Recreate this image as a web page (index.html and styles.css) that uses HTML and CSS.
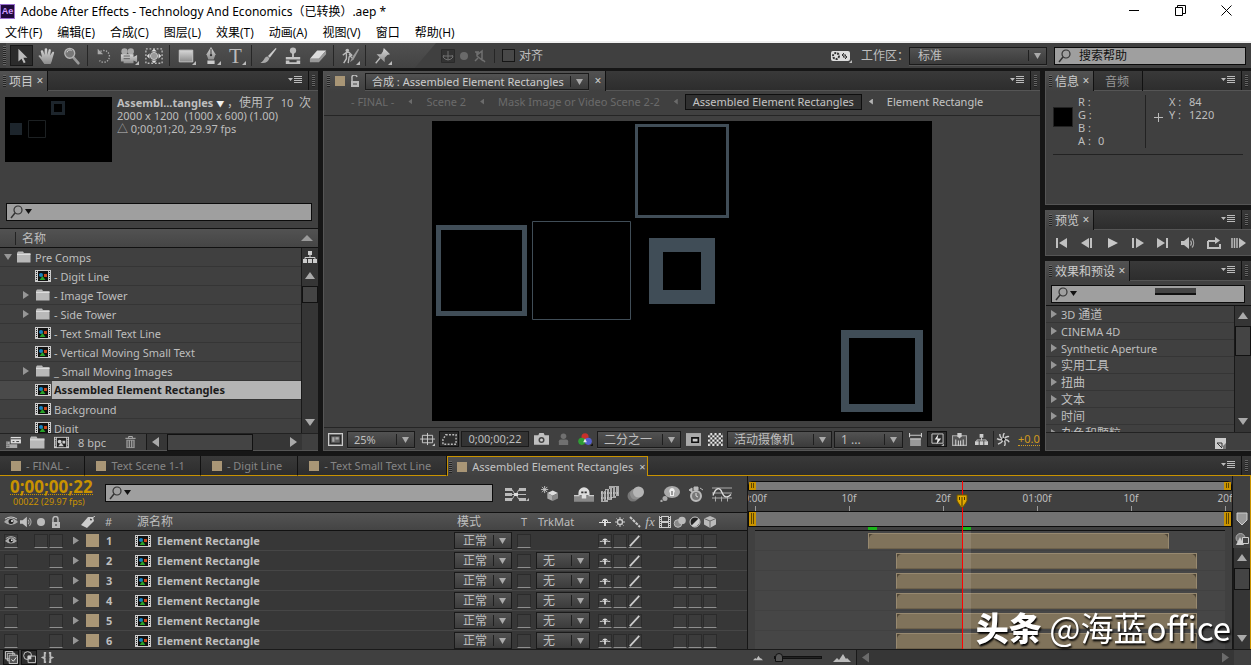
FILE: index.html
```html
<!DOCTYPE html>
<html lang="zh-CN">
<head>
    <meta charset="UTF-8">
    <meta name="viewport" content="width=device-width, initial-scale=1.0">
    <title>Adobe After Effects - Technology And Economics（已转换）.aep *</title>
    <link rel="stylesheet" href="styles.css">
</head>
<body>
    <!-- Icon sprite -->
    <svg class="sprite" aria-hidden="true">
        <defs>
            <linearGradient id="metal" x1="0" y1="0" x2="0" y2="1"><stop offset="0" stop-color="#d8d8d8"/><stop offset="1" stop-color="#8c8c8c"/></linearGradient>
            <pattern id="checker" width="4" height="4" patternUnits="userSpaceOnUse"><rect width="4" height="4" fill="#eee"/><path d="M0 0h2v2H0zM2 2h2v2H2z" fill="#333"/></pattern>
        </defs>
        <symbol id="i-cursor" viewBox="0 0 20 20"><path d="M6 2v14l3.500-3 2.500 5 2-1-2.500-5H16z" fill="#bbb"/></symbol>
        <symbol id="i-hand" viewBox="0 0 20 20"><path d="M7 19C5 16 3 13 .5 10c1-1.500 2.500-.5 4 1.500L3 4.500c1-1.500 2.500-.5 3 .5l1.200 4L7.500 2c.8-1.200 2.500-.8 2.700.3L10.500 9l1.300-6c.9-1 2.500-.4 2.500.6L13.500 9.500l2.300-3.800c1-.8 2.400 0 2.100 1L16 13c-.5 2-1 4-2 6z" fill="url(#metal)"/></symbol>
        <symbol id="i-zoom" viewBox="0 0 20 20"><path d="m11 11 6 7" stroke="#999" stroke-width="3" stroke-linecap="round"/><circle cx="7.500" cy="7" r="5.500" fill="#777" stroke="#b5b5b5" stroke-width="1.500"/><path d="M4.500 6a3 3 0 0 1 5-2" stroke="#ddd" fill="none"/></symbol>
        <symbol id="i-rotate" viewBox="0 0 20 20"><path d="M4 7a6.500 6.500 0 1 1 1 8" fill="none" stroke="#aaa" stroke-width="1.500" stroke-dasharray="1.500 1.500"/><path d="M3 2v6h6z" fill="#aaa"/></symbol>
        <symbol id="i-camera" viewBox="0 0 20 20"><circle cx="5" cy="5" r="3.500" fill="#aaa"/><circle cx="12" cy="5" r="3.500" fill="#aaa"/><path d="M1 8h14v3l4-2v8l-4-2v3H4v-2H1z" fill="url(#metal)"/><path d="M4 10h7M4 13h7" stroke="#555"/></symbol>
        <symbol id="i-panbehind" viewBox="0 0 20 20"><path d="M1 2h18v16H1z" fill="none" stroke="#bbb" stroke-width="1.500" stroke-dasharray="2 2"/><circle cx="10" cy="10" r="4" fill="#999" stroke="#ccc"/><path d="m10 2 3 3H7zM10 18l3-3H7zM2 10l3-3v6zM18 10l-3-3v6z" fill="#ddd"/></symbol>
        <symbol id="i-rect" viewBox="0 0 20 20"><path d="M2.500 3.500h15v13h-15z" fill="url(#metal)" stroke="#ccc"/></symbol>
        <symbol id="i-pen" viewBox="0 0 20 20"><path d="M10 0 5 8l2 6h6l2-6z" fill="url(#metal)"/><path d="M10 2v6" stroke="#333"/><circle cx="10" cy="9" r="1.300" fill="#333"/><path d="M6 15h8v4H6z" fill="#ccc"/></symbol>
        <symbol id="i-brush" viewBox="0 0 20 20"><path d="M18.500 1 10 10l2 2 7.500-10z" fill="#ccc"/><path d="M9.500 10.500c-4 0-3 5-8 7 5 1 9-.5 10-5z" fill="#aaa"/></symbol>
        <symbol id="i-stamp" viewBox="0 0 20 20"><circle cx="10" cy="4" r="3.500" fill="#bbb"/><path d="M9 6h2v5h7v3H2v-3h7zM2 15h4v2h8v-2h4v4H2z" fill="#c4c4c4"/></symbol>
        <symbol id="i-eraser" viewBox="0 0 20 20"><path d="m1 13 8-9h10l-8 9z" fill="#ddd"/><path d="M1 13h10v4H1zM11 13l8-9v4l-8 9z" fill="#999"/></symbol>
        <symbol id="i-roto" viewBox="0 0 20 20"><circle cx="7" cy="4" r="2" fill="#bbb"/><path d="m2 9 4-3h3l3 3-3 2-1 7M6 7v6l-3 5M9 8l3 4" fill="none" stroke="#bbb" stroke-width="1.500"/><path d="m19 2-7 10-2 5 4-3 6-11z" fill="#999"/></symbol>
        <symbol id="i-pin" viewBox="0 0 20 20"><path d="m12 1 7 7-3 1-3 3v5L4 8h5l2-3z" fill="url(#metal)"/><path d="m8 12-5 6" stroke="#bbb" stroke-width="1.500"/></symbol>
        <symbol id="i-axis1" viewBox="0 0 14 14"><path d="M.5.500h13v13H.5z" fill="#333" stroke="#2a2a2a"/><path d="M7 2v9M3 6l-1 2 2 2 3 1 3-1 2-2-1-2M2 7h10" stroke="#707070" fill="none"/></symbol>
        <symbol id="i-axis2" viewBox="0 0 14 14"><circle cx="7" cy="7" r="4" fill="#6a6a6a"/></symbol>
        <symbol id="i-axis3" viewBox="0 0 14 14"><path d="M2 3h4M4 3v4l5 4V2l-5 4M10 11l2 2M2 12l3-3" stroke="#707070" stroke-width="1.500" fill="none"/></symbol>
        <symbol id="i-gear" viewBox="0 0 22 14"><rect x="1" y="2" width="19" height="10" rx="2" fill="#ddd"/><circle cx="6" cy="7" r="3" fill="none" stroke="#333" stroke-width="2" stroke-dasharray="2 1"/><path d="m14 4-2 2 2 2M12 6h4M15 6l2 2-2 2M17 8h-4" stroke="#333" fill="none"/><path d="M22 11v3h-3z" fill="#bbb"/></symbol>
        <symbol id="i-menu" viewBox="0 0 14 8"><path d="M0 2h5L2.500 5zM6 0h8v1H6zM6 2h8v1H6zM6 4h8v1H6zM6 6h8v1H6z" fill="#bbb"/></symbol>
        <symbol id="i-search" viewBox="0 0 24 14"><circle cx="8" cy="5" r="4" fill="none" stroke="#333" stroke-width="1.200"/><path d="m5 8-4 5" stroke="#333" stroke-width="1.500"/><path d="M15 4h7l-3.500 5z" fill="#111"/></symbol>
        <symbol id="i-lens" viewBox="0 0 14 14"><circle cx="8" cy="5" r="4" fill="none" stroke="#333" stroke-width="1.200"/><path d="m5 8-4 5" stroke="#333" stroke-width="1.500"/></symbol>
        <symbol id="i-lock" viewBox="0 0 10 12"><path d="M2 6V3a2.500 2.500 0 0 1 5 0v3" fill="none" stroke="#bbb" stroke-width="1.500"/><path d="M1 6h8v6H1z" fill="#bbb"/><path d="M5 8v2" stroke="#333"/></symbol>
        <symbol id="i-unlock" viewBox="0 0 10 12"><path d="M2 6V3a2.500 2.500 0 0 1 5-1" fill="none" stroke="#bbb" stroke-width="1.500"/><path d="M1 6h8v6H1z" fill="#bbb"/><path d="M3 9h4" stroke="#444"/></symbol>
        <symbol id="i-comp" viewBox="0 0 16 12"><path d="M0 0h16v12H0z" fill="#ccc"/><path d="M3 1h10v10H3z" fill="#111"/><path d="M1 1h1v1H1zM1 3h1v1H1zM1 5h1v1H1zM1 7h1v1H1zM1 9h1v1H1zM14 1h1v1h-1zM14 3h1v1h-1zM14 5h1v1h-1zM14 7h1v1h-1zM14 9h1v1h-1z" fill="#222"/><circle cx="6" cy="5" r="2" fill="#1883c0"/><path d="M9 4h3v3H9z" fill="#c8461a"/><path d="m7.500 6 3 4h-6z" fill="#29a329"/></symbol>
        <symbol id="i-compgrey" viewBox="0 0 16 12"><path d="M0 0h16v12H0z" fill="#ccc"/><path d="M3 1h10v10H3z" fill="#222"/><path d="M1 1h1v1H1zM1 3h1v1H1zM1 5h1v1H1zM1 7h1v1H1zM1 9h1v1H1zM14 1h1v1h-1zM14 3h1v1h-1zM14 5h1v1h-1zM14 7h1v1h-1zM14 9h1v1h-1z" fill="#222"/><circle cx="6" cy="5" r="2" fill="#ccc"/><path d="M9 4h3v3H9zM7.500 6l3 4h-6z" fill="#ccc"/></symbol>
        <symbol id="i-folder" viewBox="0 0 14 12"><path d="M0 2 1 .5h5L7 2h6.500v9.500H0z" fill="#b9b9b9"/><path d="M0 3.500h13.500" stroke="#ddd"/></symbol>
        <symbol id="i-interpret" viewBox="0 0 16 14"><path d="M5 1h11v7H5z" fill="#ddd"/><path d="M5 3h11M7 6h2M11 6h3" stroke="#333"/><path d="M0 6h4v3h8v4H0z" fill="#aaa"/><path d="M1 7v6M3 9v4" stroke="#333" stroke-dasharray="1 1"/></symbol>
        <symbol id="i-trash" viewBox="0 0 12 14"><path d="M4 2V.5h4V2M.5 2.500h11" stroke="#bbb" fill="none"/><path d="M1.500 4h9v9h-9z" fill="#999"/><path d="M3.500 5v7M6 5v7M8.500 5v7" stroke="#444"/></symbol>
        <symbol id="i-tree" viewBox="0 0 14 14"><path d="M5 1h4v4H5zM0 9h4v4H0zM5 9h4v4H5zM10 9h4v4h-4z" fill="#ccc"/><path d="M7 5v3M2 9V7.500h10V9" stroke="#ccc" fill="none"/></symbol>
        <symbol id="i-first" viewBox="0 0 16 14"><path d="M2 2h2v10H2zM13 2v10L5 7z" fill="#c0c0c0"/></symbol>
        <symbol id="i-prev" viewBox="0 0 16 14"><path d="M10 2v10L2 7zM11 2h2v10h-2z" fill="#c0c0c0"/></symbol>
        <symbol id="i-play" viewBox="0 0 16 14"><path d="M3 2v10l10-5z" fill="#c8c8c8"/></symbol>
        <symbol id="i-next" viewBox="0 0 16 14"><path d="M2 2h2v10H2zM6 2v10l8-5z" fill="#c0c0c0"/></symbol>
        <symbol id="i-last" viewBox="0 0 16 14"><path d="M2 2v10l8-5zM11 2h2v10h-2z" fill="#c0c0c0"/></symbol>
        <symbol id="i-sound" viewBox="0 0 16 14"><path d="M1 5h3l5-4v12L4 9H1z" fill="#c0c0c0"/><path d="M10.500 4.500a4 4 0 0 1 0 5M12 2.500a7 7 0 0 1 0 9" fill="none" stroke="#aaa" stroke-width="1.200"/></symbol>
        <symbol id="i-loop" viewBox="0 0 16 14"><path d="M2 5v7h12V8M2 5h8" fill="none" stroke="#c0c0c0" stroke-width="2"/><path d="M9 1v7l5-3.500z" fill="#c0c0c0"/></symbol>
        <symbol id="i-ram" viewBox="0 0 16 14"><path d="M1 2v10M3.500 2v10M6 2v10" stroke="#bbb" stroke-width="1.500"/><path d="M8 2v10l7-5z" fill="#c0c0c0"/></symbol>
        <symbol id="i-new" viewBox="0 0 11 11"><path d="M0 0h11v11H0z" fill="#ccc"/><path d="M2 5h5v4M2 5l5 5" stroke="#333" fill="none"/><path d="M11 5v6H8V8z" fill="#777"/></symbol>
        <symbol id="i-always" viewBox="0 0 14 12"><path d="M.5.500h13v11H.5z" fill="#555" stroke="#ccc"/><path d="M2.500 2.500h9v7h-9z" fill="#666" stroke="#222"/><path d="M4 4h2v4H4zM7 4h3v2H7z" fill="#aaa"/></symbol>
        <symbol id="i-grid" viewBox="0 0 16 14"><path d="M2.500 2.500h11v8h-11zM0 6.500h16M8 0v13" fill="none" stroke="#ccc"/><path d="M16 11v3h-3z" fill="#ccc"/></symbol>
        <symbol id="i-mask" viewBox="0 0 16 12"><path d="M4 1h11v10H1V6z" fill="none" stroke="#bbb" stroke-width="1.500" stroke-dasharray="2 1.500"/></symbol>
        <symbol id="i-photo" viewBox="0 0 14 12"><path d="M0 2h4l1-2h4l1 2h4v9H0z" fill="#c0c0c0"/><circle cx="7" cy="6.500" r="2.800" fill="#444"/><circle cx="7" cy="6.500" r="1.400" fill="#ccc"/></symbol>
        <symbol id="i-person" viewBox="0 0 12 14"><circle cx="6" cy="3.500" r="3" fill="#707070"/><path d="M1 13V9q0-2 2-2h6q2 0 2 2v4z" fill="#707070"/></symbol>
        <symbol id="i-rgb" viewBox="0 0 16 14"><circle cx="7.500" cy="4" r="3.800" fill="#c8302a"/><circle cx="4" cy="9" r="3.800" fill="#2f9d35"/><circle cx="11" cy="9" r="3.800" fill="#555fd0"/><path d="m7.500 6 2 4h-4z" fill="#eee"/><path d="M16 11v3h-3z" fill="#111"/></symbol>
        <symbol id="i-roi" viewBox="0 0 14 12"><path d="M0 0h14v12H0z" fill="#aaa"/><path d="M5.500 4.500h6v4h-6z" fill="#ccc" stroke="#111" stroke-width="1.500"/></symbol>
        <symbol id="i-checker" viewBox="0 0 14 12"><path d="M0 0h14v12H0z" fill="url(#checker)"/></symbol>
        <symbol id="i-aspect" viewBox="0 0 12 12"><path d="M1 5h10v7H1z" fill="#999"/><path d="M.5 0v4M11.500 0v4M1 2h10M1 5.500h10" stroke="#ccc"/></symbol>
        <symbol id="i-fast" viewBox="0 0 14 14"><path d="M1 1h12v10H1z" fill="none" stroke="#ccc"/><path d="m8 1-4 6h3l-1 5 5-6H7z" fill="#eee"/><path d="M14 11v3h-3z" fill="#aaa"/></symbol>
        <symbol id="i-tline" viewBox="0 0 14 12"><path d="M.5 2.500h13v9H.5z" fill="#555" stroke="#aaa"/><path d="M3.500 12V6M6 12V7M8 12V7M10.500 12V6" stroke="#ccc"/><path d="M5 0h4v3L7 5 5 3z" fill="#ccc"/></symbol>
        <symbol id="i-aperture" viewBox="0 0 14 14"><path d="M7 7Q6 2 8 0M7 7Q10 3 13 4M7 7q5 0 6 3M7 7q3 3 1 7M7 7q-2 4-6 5M7 7Q3 8 0 6M7 7Q3 5 3 1" fill="none" stroke="#ccc" stroke-width="1.500"/><circle cx="7" cy="7" r="1.500" fill="#111"/></symbol>
        <symbol id="i-flow" viewBox="0 0 24 14"><path d="M0 1h7v3H0zM0 6h7v3H0zM0 11h7v3H0zM14 1h7v3h-7zM14 11h7v3h-7z" fill="#bbb"/><path d="m7 2.500 3 5-3 5M7 7.500h8M14 2.500l-3 5 3 5M14 7.500h7" stroke="#bbb" fill="none"/><path d="M9 6h4v3H9z" fill="#ddd"/><path d="M24 11v3h-3z" fill="#bbb"/></symbol>
        <symbol id="i-draft" viewBox="0 0 20 18"><path d="M4 0v8M0 4h8M1 1l6 6M7 1 1 7" stroke="#ccc"/><path d="m13 5 6 3-6 3-6-3z" fill="#ddd"/><path d="M7 8l6 3v6l-6-3z" fill="#aaa"/><path d="m19 8-6 3v6l6-3z" fill="#888"/></symbol>
        <symbol id="i-shybig" viewBox="0 0 18 14"><path d="M0 8h18v6H0z" fill="#888"/><path d="M0 8.500h5M13 8.500h5" stroke="#ccc"/><path d="M4 6a5 5 0 0 1 10 0v2h-3v3H7V8H4z" fill="#ddd"/><path d="M6.500 5.500h2M9.500 5.500h2" stroke="#333" stroke-width="1.500"/></symbol>
        <symbol id="i-frames" viewBox="0 0 18 16"><path d="M8 0h10v10h-3v2h-4v2H7v2H0V5h4V3h4z" fill="#aaa"/><path d="M2.500 5v10M5.500 4v10M8.500 3v10M11.500 2v9M14.500 1v9" stroke="#444"/><path d="M0 7h18M0 12h11" stroke="#ddd" stroke-dasharray="1 1"/></symbol>
        <symbol id="i-blurbig" viewBox="0 0 18 16"><circle cx="6" cy="10" r="5.500" fill="#777"/><circle cx="8.500" cy="8" r="5.500" fill="#8e8e8e"/><circle cx="11.500" cy="6" r="5.500" fill="#b5b5b5"/></symbol>
        <symbol id="i-bulb" viewBox="0 0 20 16"><ellipse cx="12" cy="6" rx="8" ry="6" fill="#aaa"/><circle cx="5" cy="12.500" r="2.500" fill="#aaa"/><circle cx="1.500" cy="15" r="1.200" fill="#aaa"/><path d="M12 2a3 3 0 0 1 2 5v3h-4V7a3 3 0 0 1 2-5z" fill="#eee"/><path d="M12 5v4" stroke="#444"/></symbol>
        <symbol id="i-watch" viewBox="0 0 16 16"><circle cx="8" cy="10" r="5" fill="#777" stroke="#bbb" stroke-width="2"/><path d="M6 1h4v3H6zM1 4l3-2v4zM15 4l-3-2" fill="#bbb" stroke="#bbb"/><path d="M8 7v3l2 1" stroke="#ddd" fill="none"/></symbol>
        <symbol id="i-graph" viewBox="0 0 20 15"><path d="M0 1.500h20M0 6.500h20M0 11.500h20M3.500 10v5M9.500 10v5M15.500 10v5" stroke="#aaa"/><path d="M1 9C4 0 8 1 10 6s5 6 9 2" fill="none" stroke="#ddd" stroke-width="1.300"/></symbol>
        <symbol id="i-eye" viewBox="0 0 14 12"><path d="M0 6q7-8 14 0-7 6-14 0z" fill="#aaa"/><circle cx="7" cy="5.500" r="2.500" fill="#222"/><path d="M1 3q6-4 12 0" fill="none" stroke="#ccc"/><circle cx="8" cy="5" r="1" fill="#eee"/></symbol>
        <symbol id="i-solo" viewBox="0 0 14 12"><circle cx="7" cy="6" r="4" fill="#bbb"/></symbol>
        <symbol id="i-tag" viewBox="0 0 14 12"><path d="M0 9 7 1h5l1 4-7 7z" fill="#ccc"/><circle cx="10" cy="3.500" r="1" fill="#333"/><path d="m10 3 4-3" stroke="#ccc"/></symbol>
        <symbol id="i-shy" viewBox="0 0 14 12"><path d="M1 6.500h3M10 6.500h3" stroke="#ddd"/><path d="M4 6a3 3 0 0 1 6 0v1H8v3H6V7H4z" fill="#ddd"/><path d="M5 5.500h1M8 5.500h1" stroke="#222"/></symbol>
        <symbol id="i-sun" viewBox="0 0 14 12"><circle cx="7" cy="6" r="2.500" fill="none" stroke="#ccc" stroke-width="1.300"/><path d="M7 1v2M7 9v2M2 6h2M10 6h2M3.500 2.500l1 1M10.500 2.500l-1 1M3.500 9.500l1-1M10.500 9.500l-1-1" stroke="#ccc"/></symbol>
        <symbol id="i-quality" viewBox="0 0 14 12"><path d="m2 1 10 10" stroke="#ccc" stroke-width="2" stroke-dasharray="3 1"/></symbol>
        <symbol id="i-slash" viewBox="0 0 14 14"><path d="M1 13 12 1" stroke="#ccc" stroke-width="2"/></symbol>
        <symbol id="i-film" viewBox="0 0 14 12"><path d="M1 0h12v12H1z" fill="#ccc"/><path d="M4 1h6v4H4zM4 7h6v4H4z" fill="#444"/><path d="M2.500 0v12M11.500 0v12" stroke="#333" stroke-dasharray="1 1"/></symbol>
        <symbol id="i-blur" viewBox="0 0 14 12"><circle cx="5" cy="7.500" r="3.800" fill="#888" stroke="#bbb"/><circle cx="9" cy="4.500" r="3.800" fill="#bbb"/></symbol>
        <symbol id="i-adjust" viewBox="0 0 14 12"><circle cx="7" cy="6" r="5" fill="#222" stroke="#ccc"/><path d="M10.500 2.500a5 5 0 0 1-7 7z" fill="#ccc"/></symbol>
        <symbol id="i-cube" viewBox="0 0 14 12"><path d="m7 0 6 2.500v6L7 12 1 8.500v-6z" fill="#bbb"/><path d="M1 2.500 7 5l6-2.500M7 5v7" fill="none" stroke="#666"/></symbol>
        <symbol id="i-layers" viewBox="0 0 14 14"><path d="M.5.500h8v8h-8zM2.500 2.500h8v8h-8z" fill="#333" stroke="#ccc"/><path d="M4.500 4.500h9v9h-9z" fill="#555" stroke="#ccc"/><path d="m7 9 2 2 3-4" fill="none" stroke="#eee"/></symbol>
        <symbol id="i-modes" viewBox="0 0 14 14"><circle cx="5" cy="5" r="4.300" fill="none" stroke="#ccc"/><path d="M5.500 5.500h8v7h-8z" fill="#333" stroke="#ccc"/><path d="M5 5h4v4H5z" fill="#ccc"/></symbol>
        <symbol id="i-braces" viewBox="0 0 14 14"><path d="M5.500 2H4v4L2 7l2 1v4h1.500M8.500 2H10v4l2 1-2 1v4H8.500" fill="none" stroke="#bbb" stroke-width="2"/></symbol>
        <symbol id="i-hill" viewBox="0 0 18 10"><path d="m0 9 4-4 2 2 4-6 3 5 1-1 4 4z" fill="#bbb"/></symbol>
        <symbol id="i-shapes" viewBox="0 0 14 14"><circle cx="5.500" cy="5" r="4.500" fill="#777" stroke="#aaa"/><path d="m5 4 4 8H1z" fill="#ccc"/><path d="M7.500 4.500h6v6h-6z" fill="#444" stroke="#ccc"/></symbol>
    </svg>

    <!-- Window title and menus -->
    <header class="window">
        <div class="titlebar">
            <span class="logo">Ae</span>
            <span class="title">Adobe After Effects - Technology And Economics（已转换）.aep *</span>
            <button class="win-btn" aria-label="最小化"><svg width="11" height="11"><path d="M0 5.500h10" stroke="#000"/></svg></button>
            <button class="win-btn" aria-label="还原"><svg width="11" height="11"><path d="M.5 2.500h7v8h-7zM2.500 2.500v-2h8v8h-3" fill="none" stroke="#000"/></svg></button>
            <button class="win-btn" aria-label="关闭"><svg width="11" height="11"><path d="m.5.500 10 10M10.500.5l-10 10" stroke="#000"/></svg></button>
        </div>
        <nav class="menubar">
            <a href="#">文件(F)</a><a href="#">编辑(E)</a><a href="#">合成(C)</a><a href="#">图层(L)</a><a href="#">效果(T)</a><a href="#">动画(A)</a><a href="#">视图(V)</a><a href="#">窗口</a><a href="#">帮助(H)</a>
        </nav>
    </header>

    <!-- Tools -->
    <div class="toolbar">
        <i class="grip"></i>
        <div class="tools">
            <div class="tool-group">
                <button class="tool active" aria-label="选取"><svg><use href="#i-cursor"/></svg></button>
                <button class="tool" aria-label="手形"><svg><use href="#i-hand"/></svg></button>
                <button class="tool" aria-label="缩放"><svg><use href="#i-zoom"/></svg></button>
            </div>
            <div class="tool-group">
                <button class="tool" aria-label="旋转"><svg><use href="#i-rotate"/></svg></button>
                <button class="tool more" aria-label="摄像机"><svg><use href="#i-camera"/></svg></button>
                <button class="tool" aria-label="锚点"><svg><use href="#i-panbehind"/></svg></button>
            </div>
            <div class="tool-group">
                <button class="tool more" aria-label="矩形"><svg><use href="#i-rect"/></svg></button>
                <button class="tool more" aria-label="钢笔"><svg><use href="#i-pen"/></svg></button>
                <button class="tool more type" aria-label="文字">T</button>
            </div>
            <div class="tool-group">
                <button class="tool" aria-label="画笔"><svg><use href="#i-brush"/></svg></button>
                <button class="tool" aria-label="图章"><svg><use href="#i-stamp"/></svg></button>
                <button class="tool" aria-label="橡皮擦"><svg><use href="#i-eraser"/></svg></button>
            </div>
            <div class="tool-group">
                <button class="tool more" aria-label="Roto"><svg><use href="#i-roto"/></svg></button>
            </div>
            <div class="tool-group">
                <button class="tool more" aria-label="操控点"><svg><use href="#i-pin"/></svg></button>
            </div>
        </div>
        <div class="axes">
            <svg><use href="#i-axis1"/></svg><svg><use href="#i-axis2"/></svg><svg><use href="#i-axis3"/></svg>
        </div>
        <label class="snap"><input type="checkbox"> 对齐</label>
        <svg class="gear"><use href="#i-gear"/></svg>
        <label class="ws-label" for="workspace-select">工作区：</label>
        <select class="ws-select" id="workspace-select"><option>标准</option></select>
        <div class="searchbox help-search"><svg class="lens"><use href="#i-lens"/></svg><input type="text" aria-label="搜索帮助" value="搜索帮助"></div>
    </div>

    <main class="workspace">
        <!-- Project -->
        <section class="panel project">
            <div class="tabs">
                <div class="tab on"><i class="grip"></i>项目<button class="close" aria-label="关闭">×</button></div>
                <svg class="panel-menu"><use href="#i-menu"/></svg><span class="end"><i class="grip"></i></span>
            </div>
            <div class="info-block">
                <svg class="thumb" viewBox="0 0 107 65"><path d="M0 0h107v65H0z" fill="#000"/><path d="M5 26h12v12H5z" fill="#1d252c"/><path d="M23.500 23.500h17v17h-17z" fill="none" stroke="#1c2022"/><path d="M47.500 5.500h11v11h-11z" fill="none" stroke="#1d252c" stroke-width="3"/></svg>
                <div class="meta">
                    <p><b>Assembl...tangles</b> <span class="tri">▼</span> <span class="cjk">，使用了</span>&nbsp; 10 &nbsp;<span class="cjk">次</span></p>
                    <p>2000 x 1200 &nbsp;(1000 x 600) (1.00)</p>
                    <p>△ 0;00;01;20, 29.97 fps</p>
                </div>
            </div>
            <div class="searchbox project-search"><svg><use href="#i-search"/></svg><input type="text" aria-label="搜索项目"></div>
            <div class="list-head"><span>名称</span><i class="sort"></i></div>
            <div class="project-body">
                <ul class="tree">
                    <li><i class="fold open"></i><svg class="fo"><use href="#i-folder"/></svg>Pre Comps</li>
                    <li class="sub"><i class="fold none"></i><svg><use href="#i-comp"/></svg>- Digit Line</li>
                    <li class="sub"><i class="fold"></i><svg class="fo"><use href="#i-folder"/></svg>- Image Tower</li>
                    <li class="sub"><i class="fold"></i><svg class="fo"><use href="#i-folder"/></svg>- Side Tower</li>
                    <li class="sub"><i class="fold none"></i><svg><use href="#i-comp"/></svg>- Text Small Text Line</li>
                    <li class="sub"><i class="fold none"></i><svg><use href="#i-comp"/></svg>- Vertical Moving Small Text</li>
                    <li class="sub"><i class="fold"></i><svg class="fo"><use href="#i-folder"/></svg>_ Small Moving Images</li>
                    <li class="sub selected"><i class="fold none"></i><svg><use href="#i-comp"/></svg><b>Assembled Element Rectangles</b></li>
                    <li class="sub"><i class="fold none"></i><svg><use href="#i-comp"/></svg>Background</li>
                    <li class="sub"><i class="fold none"></i><svg><use href="#i-comp"/></svg>Digit</li>
                </ul>
                <div class="vscroll">
                    <svg class="corner-icon"><use href="#i-tree"/></svg>
                    <i class="arrow up"></i><i class="knob"></i><i class="arrow down"></i>
                </div>
            </div>
            <div class="project-foot">
                <button class="ico" aria-label="解释素材"><svg><use href="#i-interpret"/></svg></button>
                <button class="ico" aria-label="新建文件夹"><svg><use href="#i-folder"/></svg></button>
                <button class="ico" aria-label="新建合成"><svg><use href="#i-compgrey"/></svg></button>
                <button class="bpc">8 bpc</button>
                <button class="ico" aria-label="删除"><svg><use href="#i-trash"/></svg></button>
                <div class="hscroll"><i class="arrow left"></i><i class="knob"></i><i class="arrow right"></i></div>
            </div>
        </section>

        <!-- Composition viewer -->
        <section class="panel comp">
            <div class="tabs">
                <div class="tab on"><i class="grip"></i><i class="swatch"></i><svg class="unlock"><use href="#i-unlock"/></svg><select class="comp-select" aria-label="合成"><option>合成 : Assembled Element Rectangles</option></select><button class="close" aria-label="关闭">×</button></div>
                <svg class="panel-menu"><use href="#i-menu"/></svg><span class="end"><i class="grip"></i></span>
            </div>
            <nav class="flowbar">
                <a href="#">- FINAL -</a><i></i><a href="#">Scene 2</a><i></i><a href="#">Mask Image or Video Scene 2-2</a><i></i><a href="#" class="current">Assembled Element Rectangles</a><i class="lit"></i><a href="#" class="lit">Element Rectangle</a>
            </nav>
            <div class="viewer">
                <svg class="canvas" viewBox="0 0 500 300">
                    <path d="M0 0h500v300H0z" fill="#000"/>
                    <g fill="none" stroke="#404d57">
                        <path d="M204.500 4.500h91v91h-91z" stroke-width="3"/>
                        <path d="M6.500 106.500h86v86h-86z" stroke-width="5"/>
                        <path d="M100.500 100.500h98v98h-98z"/>
                        <path d="M224 124h52v52h-52z" stroke-width="14"/>
                        <path d="M413 213h74v74h-74z" stroke-width="8"/>
                    </g>
                </svg>
            </div>
            <div class="viewbar">
                <button class="ico" aria-label="始终预览"><svg><use href="#i-always"/></svg></button>
                <select class="s-zoom" aria-label="放大率"><option>25%</option></select>
                <button class="ico" aria-label="网格"><svg><use href="#i-grid"/></svg></button>
                <button class="ico pressed" aria-label="蒙版"><svg><use href="#i-mask"/></svg></button>
                <button class="timebox">0;00;00;22</button>
                <button class="ico" aria-label="快照"><svg><use href="#i-photo"/></svg></button>
                <button class="ico" aria-label="显示快照"><svg><use href="#i-person"/></svg></button>
                <button class="ico" aria-label="通道"><svg><use href="#i-rgb"/></svg></button>
                <select class="s-res" aria-label="分辨率"><option>二分之一</option></select>
                <button class="ico" aria-label="目标区域"><svg><use href="#i-roi"/></svg></button>
                <button class="ico" aria-label="透明网格"><svg><use href="#i-checker"/></svg></button>
                <select class="s-cam" aria-label="3D 视图"><option>活动摄像机</option></select>
                <select class="s-view" aria-label="视图布局"><option>1 ...</option></select>
                <button class="ico" aria-label="像素长宽比"><svg><use href="#i-aspect"/></svg></button>
                <button class="ico pressed" aria-label="快速预览"><svg><use href="#i-fast"/></svg></button>
                <button class="ico" aria-label="时间轴"><svg><use href="#i-tline"/></svg></button>
                <button class="ico" aria-label="流程图"><svg><use href="#i-tree"/></svg></button>
                <button class="ico exposure-btn" aria-label="重置曝光"><svg><use href="#i-aperture"/></svg></button>
                <span class="exposure">+0.0</span>
            </div>
        </section>

        <div class="side">
            <!-- Info -->
            <section class="panel">
                <div class="tabs">
                    <div class="tab on"><i class="grip"></i>信息<button class="close" aria-label="关闭">×</button></div>
                    <div class="tab">音频</div>
                    <svg class="panel-menu"><use href="#i-menu"/></svg><span class="end"><i class="grip"></i></span>
                </div>
                <div class="info">
                    <i class="colour"></i>
                    <dl><dt>R :</dt><dd></dd><dt>G :</dt><dd></dd><dt>B :</dt><dd></dd><dt>A :</dt><dd>0</dd></dl>
                    <div class="cross"><svg width="9" height="9"><path d="M4.500 0v9M0 4.500h9" stroke="#bbb"/></svg></div>
                    <dl><dt>X :</dt><dd>84</dd><dt>Y :</dt><dd>1220</dd></dl>
                </div>
            </section>
            <!-- Preview -->
            <section class="panel">
                <div class="tabs">
                    <div class="tab on"><i class="grip"></i>预览<button class="close" aria-label="关闭">×</button></div>
                    <svg class="panel-menu"><use href="#i-menu"/></svg><span class="end"><i class="grip"></i></span>
                </div>
                <div class="transport">
                    <button aria-label="第一帧"><svg><use href="#i-first"/></svg></button>
                    <button aria-label="上一帧"><svg><use href="#i-prev"/></svg></button>
                    <button aria-label="播放"><svg><use href="#i-play"/></svg></button>
                    <button aria-label="下一帧"><svg><use href="#i-next"/></svg></button>
                    <button aria-label="最后一帧"><svg><use href="#i-last"/></svg></button>
                    <button aria-label="静音"><svg><use href="#i-sound"/></svg></button>
                    <button aria-label="循环"><svg><use href="#i-loop"/></svg></button>
                    <button aria-label="RAM 预览"><svg><use href="#i-ram"/></svg></button>
                </div>
            </section>
            <!-- Effects & presets -->
            <section class="panel effects">
                <div class="tabs">
                    <div class="tab on"><i class="grip"></i>效果和预设<button class="close" aria-label="关闭">×</button></div>
                    <svg class="panel-menu"><use href="#i-menu"/></svg><span class="end"><i class="grip"></i></span>
                </div>
                <div class="searchbox fx-search"><svg><use href="#i-search"/></svg><input type="text" aria-label="搜索效果"><i class="dash"></i></div>
                <div class="fx-body">
                    <ul class="fx-list">
                        <li><i class="fold"></i><span>3D <span class="cjk">通道</span></span></li>
                        <li><i class="fold"></i>CINEMA 4D</li>
                        <li><i class="fold"></i>Synthetic Aperture</li>
                        <li><i class="fold"></i><span class="cjk">实用工具</span></li>
                        <li><i class="fold"></i><span class="cjk">扭曲</span></li>
                        <li><i class="fold"></i><span class="cjk">文本</span></li>
                        <li><i class="fold"></i><span class="cjk">时间</span></li>
                        <li><i class="fold"></i><span class="cjk">杂色和颗粒</span></li>
                    </ul>
                    <div class="vscroll"><i class="arrow up"></i><i class="knob tall"></i><i class="arrow down"></i></div>
                </div>
                <div class="fx-foot"><button aria-label="新建"><svg><use href="#i-new"/></svg></button></div>
            </section>
        </div>
    </main>

    <!-- Timeline -->
    <section class="timeline">
        <div class="tl-tabs">
            <div class="tl-tab"><i class="swatch"></i>- FINAL -</div>
            <div class="tl-tab"><i class="swatch"></i>Text Scene 1-1</div>
            <div class="tl-tab"><i class="swatch"></i>- Digit Line</div>
            <div class="tl-tab"><i class="swatch"></i>- Text Small Text Line</div>
            <div class="tl-tab on"><i class="grip"></i><i class="swatch"></i>Assembled Element Rectangles<button class="close" aria-label="关闭">×</button></div>
            <div class="tl-fill"><svg class="panel-menu"><use href="#i-menu"/></svg><span class="end"><i class="grip"></i></span></div>
        </div>
        <div class="tl-main">
            <div class="outline">
                <div class="tl-head">
                    <div class="clock"><button class="tc">0;00;00;22</button><small>00022 (29.97 fps)</small></div>
                    <div class="searchbox tl-search"><svg><use href="#i-search"/></svg><input type="text" aria-label="搜索图层"></div>
                    <div class="tl-icons">
                        <svg class="wide"><use href="#i-flow"/></svg><svg><use href="#i-draft"/></svg><svg class="lead"><use href="#i-shybig"/></svg><svg><use href="#i-frames"/></svg><svg><use href="#i-blurbig"/></svg><svg class="lead"><use href="#i-bulb"/></svg><svg><use href="#i-watch"/></svg><svg><use href="#i-graph"/></svg>
                    </div>
                </div>
                <div class="layer-clip">
                    <table class="layers">
                        <colgroup><col class="c-av"><col class="c-tag"><col class="c-num"><col class="c-name"><col class="c-mode"><col class="c-t"><col class="c-trk"><col class="c-sw"><col></colgroup>
                        <thead>
                            <tr>
                                <th><div class="cells"><svg><use href="#i-eye"/></svg><svg><use href="#i-sound"/></svg><svg><use href="#i-solo"/></svg><svg><use href="#i-lock"/></svg></div></th>
                                <th class="tag"><svg><use href="#i-tag"/></svg></th>
                                <th>#</th>
                                <th><span class="cjk">源名称</span></th>
                                <th><span class="cjk">模式</span></th>
                                <th>T</th>
                                <th>TrkMat</th>
                                <th><div class="cells"><svg><use href="#i-shy"/></svg><svg><use href="#i-sun"/></svg><svg><use href="#i-quality"/></svg><em>fx</em><svg><use href="#i-film"/></svg><svg><use href="#i-blur"/></svg><svg><use href="#i-adjust"/></svg><svg><use href="#i-cube"/></svg></div></th>
                                <th></th>
                            </tr>
                        </thead>
                        <tbody id="layer-rows"></tbody>
                    </table>
                </div>
            </div>
            <div class="graph">
                <div class="nav-bar"><i></i><i></i></div>
                <div class="ruler">
                    <span style="left:0%">0:00f</span><span style="left:20%">10f</span><span style="left:40%">20f</span><span style="left:60%">01:00f</span><span style="left:80%">10f</span><span style="left:100%">20f</span>
                </div>
                <div class="work-bar"><i></i><i></i></div>
                <div class="cache"><i style="left:24%"></i><i style="left:44%"></i></div>
                <div class="tracks" id="tracks"></div>
                <div class="overlay">
                    <i class="frame" style="left:44%"></i>
                    <i class="playhead" style="left:44%"></i>
                    <svg class="marker" style="left:44%" viewBox="0 0 12 14"><path d="M1 1h10v6L7 13H5L1 7z" fill="#e0a800" stroke="#6d5200"/><path d="M3.500 3v3M6 3v9M8.500 3v3" stroke="#4a3800"/></svg>
                </div>
            </div>
            <div class="tl-strip">
                <svg class="shield" viewBox="0 0 12 14"><path d="M1 1h10v7l-5 5-5-5z" fill="#999" stroke="#ccc"/></svg>
                <svg class="shapes"><use href="#i-shapes"/></svg>
                <div class="vscroll"><i class="arrow up"></i><i class="knob mid"></i><i class="arrow down"></i></div>
            </div>
        </div>
        <div class="tl-foot">
            <div class="foot-left">
                <button class="ico pressed" aria-label="图层开关"><svg><use href="#i-layers"/></svg></button>
                <button class="ico pressed" aria-label="转换控制"><svg><use href="#i-modes"/></svg></button>
                <button class="ico" aria-label="入出点"><svg><use href="#i-braces"/></svg></button>
            </div>
            <div class="zoomer"><svg class="small"><use href="#i-hill"/></svg><input type="range" min="0" max="100" value="0" aria-label="时间缩放"><svg><use href="#i-hill"/></svg></div>
            <div class="hscroll"><i class="arrow left"></i><i class="arrow right"></i></div>
        </div>
    </section>

    <div class="watermark"><b>头条</b> @海蓝office</div>

    <script>
        // start / length are percentages of the visible time span
        const layers = [
            { start: 24, length: 64 },
            { start: 30, length: 64 },
            { start: 30, length: 64 },
            { start: 30, length: 64 },
            { start: 30, length: 64 },
            { start: 30, length: 64 }
        ];
        const rows = document.getElementById('layer-rows');
        const tracks = document.getElementById('tracks');
        const box = label => `<input type="checkbox" class="cell" aria-label="${label}">`;
        const gap = '<i class="gap"></i>';

        layers.forEach((layer, i) => {
            const top = i === 0;
            rows.innerHTML += `<tr>
                <td><div class="cells">${top ? '<svg class="cell"><use href="#i-eye"/></svg>' : box('视频')}${gap}${top ? box('独奏') : gap}${box('锁定')}</div></td>
                <td><div class="tagcell"><i class="fold"></i><i class="swatch big"></i></div></td>
                <td class="num">${i + 1}</td>
                <td class="name"><svg><use href="#i-comp"/></svg>Element Rectangle</td>
                <td><select class="mode" aria-label="模式"><option>正常</option></select></td>
                <td class="t">${box('T')}</td>
                <td>${top ? '' : '<select class="trk" aria-label="TrkMat"><option>无</option></select>'}</td>
                <td><div class="cells"><svg class="cell"><use href="#i-shy"/></svg>${box('折叠')}<svg class="cell"><use href="#i-slash"/></svg>${gap}${gap}${box('运动模糊')}${box('调整图层')}${box('3D')}</div></td>
                <td></td></tr>`;
            tracks.innerHTML += `<div class="track"><i style="left:${layer.start}%;width:${layer.length}%"></i></div>`;
        });
    </script>
</body>
</html>
```

FILE: styles.css
```css
/* Base */
* {
    margin: 0;
    padding: 0;
    box-sizing: border-box;
}

body {
    display: flex;
    flex-direction: column;
    height: 100vh;
    overflow: hidden;
    background: #161616;
    color: #bebebe;
    font: 11px/13px "Noto Sans", "Noto Sans CJK SC", sans-serif;
}

button, select, input {
    font: inherit;
    color: inherit;
    border: 0;
    border-radius: 0;
    background: none;
    outline: none;
}

a { color: inherit; text-decoration: none; }
ul { list-style: none; }
svg { display: block; flex: none; }
.sprite { position: absolute; width: 0; height: 0; }
.cjk { font-size: 12px; }

select {
    appearance: none;
    height: 17px;
    padding: 0 20px 0 8px;
    border: 1px solid #1a1a1a;
    box-shadow: 0 1px 0 #555;
    font-size: 12px;
    line-height: 15px;
    background: url("data:image/svg+xml,%3Csvg xmlns='http://www.w3.org/2000/svg' width='18' height='13'%3E%3Cpath d='M.5 1v11' stroke='%231f1f1f'/%3E%3Cpath d='M6 4h7l-3.500 6z' fill='%23aaa'/%3E%3C/svg%3E") right center no-repeat, linear-gradient(#525252, #3b3b3b);
}

/* Window header */
.window {
    background: #fff;
    color: #000;
    border-bottom: 2px solid #f0f0f0;
}

.titlebar {
    display: flex;
    align-items: center;
    height: 23px;
}

.logo {
    width: 15px;
    height: 15px;
    margin-right: 6px;
    border: 1px solid #9a6fd0;
    background: #1f0a3c;
    color: #cf9bff;
    font: bold 9px/13px "Liberation Sans", sans-serif;
    text-align: center;
}

.title { flex: 1; font-size: 12px; }

.win-btn {
    display: grid;
    place-items: center;
    width: 46px;
    height: 21px;
    align-self: flex-start;
    padding-right: 3px;
}

.menubar {
    display: flex;
    gap: 15px;
    height: 18px;
    padding-left: 5px;
    font: 12px/19px "Open Sans", "Noto Sans CJK SC", sans-serif;
}

/* Toolbar */
.toolbar {
    display: flex;
    align-items: center;
    height: 25px;
    margin-bottom: 3px;
    padding: 0 5px 0 3px;
    background: #404040;
}

.grip {
    flex: none;
    width: 3px;
    height: 12px;
    background: repeating-linear-gradient(#666 0 1px, #222 1px 2px);
}

.toolbar > .grip { height: 19px; }

.tools {
    display: flex;
    align-self: stretch;
    align-items: center;
    width: 430px;
    padding-left: 3px;
    background: linear-gradient(#505050, #434343);
    clip-path: polygon(0 0, 100% 0, 95% 100%, 0 100%);
}

.tool-group {
    display: flex;
    padding-right: 3px;
}

.tool-group + .tool-group { padding-left: 3px; border-left: 1px solid #262626; }

.tool {
    position: relative;
    display: grid;
    place-items: center;
    width: 25px;
    height: 21px;
}

.tool svg { width: 18px; height: 18px; }
.tool.active { background: #2b2b2b; border: 1px solid #181818; margin: 0 1px; width: 23px; }
.tool.type { font: 21px/20px "Liberation Serif", serif; color: #bbb; }

.tool.more::after {
    content: "";
    position: absolute;
    right: 2px;
    bottom: 1px;
    border: 2px solid transparent;
    border-right-color: #bbb;
    border-bottom-color: #bbb;
}

.axes {
    display: flex;
    gap: 2px;
    margin-left: 5px;
    padding-right: 7px;
    border-right: 1px solid #262626;
}

.axes svg { width: 14px; height: 14px; }

.snap {
    display: flex;
    align-items: center;
    gap: 4px;
    margin: 0 auto 0 7px;
    font-size: 12px;
}

.snap input {
    appearance: none;
    width: 13px;
    height: 13px;
    border: 1px solid #161616;
    background: #484848;
}

.gear { width: 22px; height: 14px; margin-right: 9px; }
.ws-label { font-size: 12px; white-space: nowrap; }
.ws-select { width: 138px; margin-right: 7px; height: 18px; }
.help-search { width: 192px; }

.searchbox {
    position: relative;
    display: flex;
    align-items: center;
    gap: 7px;
    height: 18px;
    padding: 0 3px;
    border: 1px solid #0b0b0b;
    background: #9f9f9f;
    color: #111;
    font-size: 12px;
}

.searchbox svg { width: 24px; height: 14px; }
.searchbox .lens { width: 14px; }
.searchbox input { flex: 1; width: 0; min-width: 0; }

/* Panels */
.workspace {
    display: flex;
    flex: 1;
    gap: 5px;
    min-height: 0;
    margin-bottom: 5px;
}

.panel {
    display: flex;
    flex-direction: column;
    min-height: 0;
    background: #404040;
    border-bottom: 1px solid #555;
}

.tabs {
    display: flex;
    flex: none;
    height: 20px;
    background: linear-gradient(#393939, #2d2d2d);
    border-bottom: 1px solid #555;
}

.tab {
    display: flex;
    align-items: center;
    gap: 3px;
    height: 20px;
    padding: 0 13px 0 11px;
    border-right: 1px solid #111;
    font-size: 12px;
    color: #969696;
}

.tab.on {
    padding: 0 3px;
    background: linear-gradient(#525252, #404040);
    color: #ccc;
}

.close { width: 8px; color: #ccc; line-height: 12px; }
.panel-menu { width: 14px; height: 8px; margin: 5px 6px 0 auto; }
.end { display: flex; align-items: center; padding: 0 3px; border-left: 1px solid #111; }

.swatch { flex: none; width: 10px; height: 10px; background: #a99676; }

/* Triangles and scrollbars */
.fold {
    flex: none;
    width: 6px;
    height: 8px;
    background: #969696;
    clip-path: polygon(0 0, 100% 50%, 0 100%);
}

.fold.open { width: 8px; height: 6px; clip-path: polygon(0 0, 100% 0, 50% 100%); }
.fold.none { visibility: hidden; }

.vscroll {
    display: flex;
    flex-direction: column;
    flex: none;
    align-items: center;
    width: 17px;
    background: #353535;
    border-left: 1px solid #191919;
}

.arrow { flex: none; width: 10px; height: 7px; margin: 6px 0 7px; background: #aaa; clip-path: polygon(50% 0, 100% 100%, 0 100%); }
.arrow.down { margin-top: auto; clip-path: polygon(0 0, 100% 0, 50% 100%); }
.arrow.left, .arrow.right { width: 7px; height: 10px; margin: 0 5px; clip-path: polygon(100% 0, 100% 100%, 0 50%); }
.arrow.right { margin-left: auto; clip-path: polygon(0 0, 100% 50%, 0 100%); }
.knob { width: 100%; height: 17px; border: 1px solid #111; background: #444; }
.knob.tall { height: 30px; }
.knob.mid { height: 22px; }

.hscroll {
    display: flex;
    align-items: center;
    background: #363636;
    border-left: 1px solid #191919;
}

.hscroll .knob { width: 86px; margin-left: 3px; }

/* Project panel */
.project { flex: 0 0 318px; min-width: 0; }
.info-block { display: flex; gap: 5px; height: 112px; padding: 6px 5px 0; }
.thumb { width: 107px; height: 65px; }
.meta { white-space: nowrap; }
.meta p { height: 13px; line-height: 11px; }
.tri { font-size: 8px; color: #eee; }
.project-search { flex: none; width: 306px; margin-left: 6px; }

.list-head {
    display: flex;
    flex: none;
    justify-content: space-between;
    align-items: center;
    height: 20px;
    margin-top: 7px;
    padding: 0 5px 0 15px;
    border: solid #111;
    border-width: 1px 0;
    background: linear-gradient(#525252, #454545);
    font-size: 12px;
}

.list-head span { padding-left: 6px; border-left: 1px solid #222; }
.sort { width: 12px; height: 6px; background: #999; clip-path: polygon(50% 0, 100% 100%, 0 100%); }

.project-body { display: flex; flex: 1; min-height: 0; }
.tree { flex: 1; overflow: hidden; }

.tree li {
    display: flex;
    align-items: center;
    gap: 3px;
    height: 19px;
    padding-left: 4px;
    border-bottom: 1px solid #353535;
}

.tree svg { width: 16px; height: 12px; }
.tree .fo { width: 14px; margin: 0 1px; }
.tree li.sub { padding-left: 23px; }
.tree .fold { margin-right: 3px; }
.tree .fold.open { margin-right: 1px; }
.tree .selected { background: #4a4a4a; }
.tree .selected b { flex: 1; margin-left: -2px; padding-left: 2px; background: #b4b4b4; color: #1c1c1c; line-height: 18px; }
.corner-icon { width: 14px; height: 14px; margin: 2px 0; }

.project-foot {
    display: flex;
    flex: none;
    align-items: center;
    gap: 6px;
    height: 17px;
    padding: 0 16px 0 4px;
    border-top: 1px solid #222;
}

.project-foot .hscroll { flex: 1; height: 16px; }
.project-foot svg { width: 16px; height: 13px; }
.bpc { margin: 0 10px 0 2px; }

/* Composition viewer */
.comp { flex: 1; min-width: 0; border-left: 1px solid #555; }
.comp .tab { gap: 5px; }
.comp-select { width: 224px; padding: 0 20px 0 6px; font-size: 11px; }
.unlock { width: 10px; height: 12px; }

.flowbar {
    display: flex;
    flex: none;
    align-items: center;
    gap: 14px;
    height: 25px;
    padding: 0 0 3px 27px;
    border-bottom: 1px solid #252525;
    color: #6b6b6b;
    white-space: nowrap;
}

.flowbar i { width: 4px; height: 6px; background: #6b6b6b; clip-path: polygon(100% 0, 100% 100%, 0 50%); }
.flowbar .current { margin: 0 -7px; padding: 0 7px; border: 1px solid #0e0e0e; background: #303030; color: #c4c4c4; line-height: 14px; }
.flowbar i.lit { background: #b4b4b4; }
.flowbar a.lit { color: #c4c4c4; }

.viewer {
    display: flex;
    flex: 1;
    justify-content: center;
    min-height: 0;
    padding: 5px 0 6px;
    background: #404040;
}

.canvas { width: 500px; height: 100%; }

.viewbar {
    display: flex;
    flex: none;
    align-items: center;
    gap: 2px;
    height: 23px;
    padding-left: 1px;
    border-top: 1px solid #252525;
    overflow: hidden;
    white-space: nowrap;
}

.viewbar select { flex: none; padding-left: 6px; }
.ico { display: grid; flex: none; place-items: center; width: 18px; height: 16px; }
.ico svg { width: 15px; height: 13px; }
.ico.pressed { border: 1px solid #111; background: #2c2c2c; }
.viewbar .ico { width: 20px; }
.s-zoom { width: 68px; font-size: 11px; }
.s-res { width: 84px; }
.s-cam { width: 105px; }
.s-view { width: 69px; }
.timebox { flex: none; width: 68px; border: 1px solid #1a1a1a; background: #333; line-height: 14px; }
.exposure-btn { border-left: 1px solid #222; }
.exposure { margin-left: 3px; color: #d09a1e; border-bottom: 1px dotted #d09a1e; }

/* Right column */
.side { display: flex; flex: 0 0 206px; min-width: 0; flex-direction: column; gap: 5px; }
.side .panel { border-left: 1px solid #555; }

.info {
    display: flex;
    height: 64px;
    margin: 0 8px 49px 7px;
    padding: 4px 0 6px;
    border-bottom: 1px solid #222;
}

.info .colour { width: 20px; height: 20px; margin: 12px 5px 0 0; border: 1px solid #222; background: #000; }
.info dl { display: grid; grid-template-columns: 20px 30px; grid-auto-rows: 13px; }
.cross { margin: 0 6px 0 17px; padding: 18px 0 0 8px; border-left: 1px solid #222; }

.transport { display: flex; justify-content: space-between; padding: 6px 4px 5px 8px; }
.transport svg { width: 16px; height: 14px; }

.effects { flex: 1; }
.fx-search { flex: none; margin: 4px 6px 2px 5px; }
.dash { position: absolute; left: 103px; top: 2px; width: 41px; height: 7px; background: #444; border-bottom: 2px solid #111; }
.fx-body { display: flex; flex: 1; min-height: 0; border-top: 1px solid #111; }
.fx-list { flex: 1; overflow: hidden; }
.fx-list li { display: flex; align-items: center; gap: 4px; height: 17px; padding-left: 5px; border-bottom: 1px solid #353535; }
.fx-foot { display: flex; flex: none; justify-content: flex-end; height: 18px; padding: 3px 25px 0; border-top: 1px solid #222; }
.fx-foot svg { width: 11px; height: 11px; }

/* Timeline */
.timeline { display: flex; flex: none; flex-direction: column; height: 209px; background: #404040; }
.tl-tabs { display: flex; flex: none; height: 20px; }

.tl-tab {
    display: flex;
    align-items: center;
    gap: 5px;
    padding: 0 15px 0 11px;
    border-right: 1px solid #111;
    border-bottom: 1px solid #c99300;
    background: linear-gradient(#393939, #2d2d2d);
    color: #858585;
    white-space: nowrap;
}

.tl-tab.on { padding: 0 1px; border: solid #c99300; border-width: 1px 1px 0; background: linear-gradient(#505050, #404040); color: #c4c4c4; }
.tl-fill { display: flex; flex: 1; border-bottom: 1px solid #c99300; background: linear-gradient(#393939, #2d2d2d); }
.tl-main { display: flex; flex: 1; min-height: 0; border-right: 1px solid #c99300; }
.outline { display: flex; flex: 0 0 748px; flex-direction: column; border-right: 1px solid #161616; }
.tl-head { display: flex; flex: none; align-items: flex-start; height: 36px; }
.clock { width: 105px; padding: 3px 0 0 10px; color: #c89200; }
.clock small { display: block; padding-left: 3px; font-size: 9px; line-height: 13px; }
.tc { font-size: 17px; line-height: 15px; font-weight: bold; border-bottom: 1px dotted #c89200; }
.tl-search { flex: none; width: 388px; margin-top: 8px; }
.tl-icons { display: flex; flex: 1; align-items: center; gap: 6px; height: 36px; padding-left: 12px; }
.tl-icons svg { width: 20px; height: 16px; }
.tl-icons .wide { width: 24px; margin-right: 5px; }
.tl-icons .lead { margin-left: 8px; }

.layer-clip { flex: 1; min-height: 0; overflow: hidden; background: #373737; }
.layers { width: 100%; table-layout: fixed; border-collapse: separate; border-spacing: 0; }
.c-av { width: 68px; }
.c-tag, .c-num { width: 32px; }
.c-name { width: 320px; }
.c-mode { width: 64px; }
.c-t { width: 20px; }
.c-trk { width: 58px; }
.c-sw { width: 138px; }

.layers th {
    height: 19px;
    padding-left: 5px;
    border: solid #111;
    border-width: 1px 0;
    background: linear-gradient(#545454, #444);
    font-weight: normal;
    line-height: 16px;
    text-align: left;
}

.layers th:first-child, .layers th:nth-child(8) { padding-left: 0; }
.layers th:nth-child(7) { padding-left: 2px; }
.layers th em { width: 14px; font: italic 13px/12px "Liberation Serif", serif; text-align: center; }
.layers .tag svg { width: 14px; height: 12px; margin-left: 8px; }
.layers td { height: 20px; border-bottom: 1px solid #464646; vertical-align: middle; }
.cells { display: flex; gap: 1px; padding-left: 4px; }
.cells svg { width: 14px; height: 12px; }
.gap { width: 14px; }

.cell {
    display: block;
    appearance: none;
    width: 14px;
    height: 14px;
    border: 1px solid #2b2b2b;
    border-bottom-color: #8f8f8f;
    background: #3c3c3c;
}

.cells svg.cell { height: 14px; }
.tagcell { display: flex; align-items: center; gap: 7px; padding-left: 5px; }
.swatch.big { width: 13px; height: 13px; }
.num { padding-left: 6px; font-weight: bold; }
.name { font-weight: bold; }
.name svg { display: inline-block; width: 16px; height: 12px; margin: 0 6px 0 3px; vertical-align: -2px; }
.layers td select { display: block; height: 17px; }
.mode { width: 58px; margin-left: 2px; }
.trk { width: 54px; padding-left: 6px; }
.t { padding-left: 1px; }

/* Graph side: everything time based sits inside the 7px side caps */
.graph { position: relative; display: flex; flex: 1; flex-direction: column; padding-top: 5px; overflow: hidden; }
.nav-bar, .work-bar { display: flex; flex: none; justify-content: space-between; height: 10px; border: 1px solid #0c0c0c; border-radius: 4px 4px 0 0; background: #7a7a7a; }
.work-bar { height: 16px; border-radius: 0; background: #727272; }
.nav-bar i, .work-bar i { width: 7px; border: solid #c99300; border-width: 1px 1px 2px 2px; background: repeating-linear-gradient(90deg, #5c4500 0 1px, #c99300 1px 2px); }
.ruler { position: relative; flex: none; height: 20px; margin: 0 7px; }
.ruler span { position: absolute; top: 1px; width: 50px; margin-left: -25px; text-align: center; font-size: 10px; }
.ruler span::after { content: ""; position: absolute; left: 25px; top: 14px; width: 1px; height: 5px; background: #999; }
.cache { position: relative; flex: none; height: 4px; margin: 0 7px; border-bottom: 1px solid #111; }
.cache i { position: absolute; width: 2%; height: 3px; background: #1ab51a; }
.tracks { flex: 1; padding: 0 7px; background: linear-gradient(#464646, #464646) content-box #373737; overflow: hidden; }
.track { position: relative; height: 20px; border-bottom: 1px solid #414141; }
.track i { position: absolute; top: 2px; height: 16px; border: 1px solid #978970; border-bottom-color: #6d614b; background: #4d4536; }
.track i::after { content: ""; position: absolute; inset: 0; border-radius: 5px 5px 0 0; background: #80735b; }
.overlay { position: absolute; inset: 5px 7px 0; }
.frame { position: absolute; top: 50px; bottom: 0; width: 2%; background: rgba(255, 255, 255, 0.1); }
.playhead { position: absolute; top: 0; bottom: 0; width: 1px; background: #f00; }
.marker { position: absolute; top: 13px; width: 12px; height: 14px; margin-left: -6px; }

.tl-strip { display: flex; flex: 0 0 18px; flex-direction: column; align-items: center; padding-top: 36px; border-left: 1px solid #161616; }
.shield { width: 12px; height: 14px; }
.shapes { width: 14px; height: 14px; margin: 7px 0 1px; }
.tl-strip .vscroll { flex: 1; }

.tl-foot { display: flex; flex: none; height: 16px; padding-right: 17px; border-top: 1px solid #1a1a1a; }
.foot-left { display: flex; gap: 2px; flex: 0 0 753px; padding-left: 3px; }
.foot-left .ico { width: 16px; height: 15px; }
.zoomer { display: flex; align-items: center; gap: 11px; width: 103px; }
.zoomer svg { width: 18px; height: 10px; }
.zoomer .small { width: 10px; height: 6px; }
.zoomer input { appearance: none; width: 48px; height: 3px; border: 1px solid #111; background: #222; }
.zoomer input::-webkit-slider-thumb { appearance: none; width: 8px; height: 9px; border: 1px solid #111; border-radius: 4px 4px 0 0; background: #555; }
.tl-foot .hscroll { flex: 1; }
.tl-foot .arrow { background: #6b6b6b; }

/* Watermark over the whole window */
.watermark {
    position: fixed;
    right: 20px;
    bottom: 18px;
    color: #fff;
    font: 33px/40px "Noto Sans CJK SC", sans-serif;
    text-shadow: 1px 2px 2px #000;
}

.watermark b { font-weight: 900; }
```
